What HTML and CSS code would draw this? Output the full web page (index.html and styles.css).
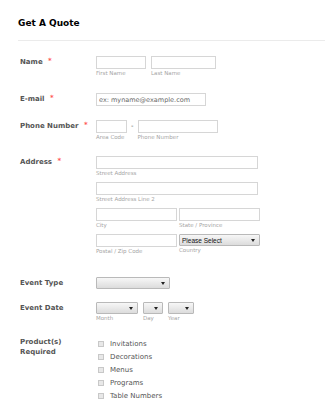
FILE: index.html
```html
<!DOCTYPE html>
<html lang="en">
<head>
  <meta charset="UTF-8" />
  <meta name="viewport" content="width=device-width, initial-scale=1.0"/>
  <title>Get A Quote</title>
  <link rel="stylesheet" href="styles.css">
</head>
<body>

  <!-- 标题 -->
  <div class="form-header">
    <h2>Get A Quote</h2>
  </div>

  <form class="quote-form">

    <div class="row row-name">
      <label class="row-label">Name <span class="req">*</span></label>
      <div class="fields">
        <div class="line">
          <span class="field"><input type="text" class="w-first"><span class="sub">First Name</span></span>
          <span class="field"><input type="text" class="w-last"><span class="sub">Last Name</span></span>
        </div>
      </div>
    </div>

    <div class="row row-email">
      <label class="row-label">E-mail <span class="req">*</span></label>
      <div class="fields">
        <input type="text" class="w-email" placeholder="ex: myname@example.com">
      </div>
    </div>

    <div class="row">
      <label class="row-label">Phone Number <span class="req">*</span></label>
      <div class="fields">
        <div class="line">
          <span class="field"><input type="text" class="w-area"><span class="sub">Area Code</span></span>
          <span class="dash">-</span>
          <span class="field"><input type="text" class="w-phone"><span class="sub">Phone Number</span></span>
        </div>
      </div>
    </div>

    <div class="row row-address">
      <label class="row-label">Address <span class="req">*</span></label>
      <div class="fields">
        <div class="line addr">
          <span class="field"><input type="text" class="w-street"><span class="sub">Street Address</span></span>
        </div>
        <div class="line addr">
          <span class="field"><input type="text" class="w-street"><span class="sub">Street Address Line 2</span></span>
        </div>
        <div class="line addr tight">
          <span class="field"><input type="text" class="w-half"><span class="sub">City</span></span>
          <span class="field"><input type="text" class="w-half"><span class="sub">State / Province</span></span>
        </div>
        <div class="line tight">
          <span class="field"><input type="text" class="w-half"><span class="sub">Postal / Zip Code</span></span>
          <span class="field">
            <span class="select w-half"><select><option>Please Select</option></select></span>
            <span class="sub">Country</span>
          </span>
        </div>
      </div>
    </div>

    <div class="row row-type">
      <label class="row-label">Event Type</label>
      <div class="fields">
        <span class="select w-type"><select><option></option></select></span>
      </div>
    </div>

    <div class="row row-date">
      <label class="row-label">Event Date</label>
      <div class="fields">
        <div class="line">
          <span class="field"><span class="select w-month"><select><option></option></select></span><span class="sub">Month</span></span>
          <span class="field"><span class="select w-day"><select><option></option></select></span><span class="sub">Day</span></span>
          <span class="field"><span class="select w-year"><select><option></option></select></span><span class="sub">Year</span></span>
        </div>
      </div>
    </div>

    <div class="row row-products">
      <label class="row-label">Product(s)<br>Required</label>
      <div class="fields checks">
        <label class="check"><input type="checkbox"> Invitations</label>
        <label class="check"><input type="checkbox"> Decorations</label>
        <label class="check"><input type="checkbox"> Menus</label>
        <label class="check"><input type="checkbox"> Programs</label>
        <label class="check"><input type="checkbox"> Table Numbers</label>
      </div>
    </div>

  </form>

</body>
</html>
```

FILE: styles.css
```css
body {
  margin: 0;
  font-family: "DejaVu Sans", Verdana, sans-serif;
  background-color: #fff;
  color: #555;
}

/* 标题 */
.form-header {
  margin-left: 18px;
  padding-top: 17px;
  height: 23px;
  border-bottom: 1px solid #ebebeb;
}
.form-header h2 {
  margin: 0;
  font-size: 9px;
  line-height: 12px;
  color: #000;
}

.quote-form {
  padding-top: 15px;
}

.row {
  display: flex;
  padding: 0 0 15px 20px;
}
.row-name { padding-bottom: 16px; }
.row-email { padding-bottom: 14px; }
.row-address { padding-bottom: 22px; }
.row-type { padding-bottom: 12px; }
.row-date { padding-bottom: 14px; }

.row-label {
  width: 76px;
  flex-shrink: 0;
  font-size: 7px;
  font-weight: bold;
  line-height: 13px;
  color: #555;
}
.row-products .row-label {
  line-height: 10px;
  padding-top: 1px;
}
.req {
  color: #f55;
  margin-left: 3px;
  position: relative;
  top: -1px;
}

.fields {
  display: flex;
  flex-direction: column;
}
.line {
  display: flex;
  gap: 5px;
}
.line.addr { margin-bottom: 5px; }
.line.tight { gap: 2px; }

.field {
  display: flex;
  flex-direction: column;
}

input[type="text"] {
  box-sizing: border-box;
  height: 13px;
  margin: 0;
  padding: 0 2px;
  border: 1px solid #d6d6d6;
  font-family: inherit;
  font-size: 6.5px;
  color: #555;
}
input::placeholder { color: #666; }

.sub {
  font-size: 5.5px;
  line-height: 8px;
  color: #a5a5a5;
}

.dash {
  font-size: 7px;
  line-height: 12px;
  margin: 0 -1px;
  color: #555;
}

.w-first { width: 50px; }
.w-last { width: 65px; }
.w-email { width: 110px; }
.w-area { width: 31px; }
.w-phone { width: 80px; }
.w-street { width: 162px; }
.w-half { width: 81px; }
.w-type { width: 74px; }
.w-month { width: 42px; }
.w-day { width: 20px; }
.w-year { width: 26px; }

/* 下拉框 */
.select {
  position: relative;
  display: block;
  box-sizing: border-box;
  height: 12px;
}
.select select {
  appearance: none;
  -webkit-appearance: none;
  display: block;
  box-sizing: border-box;
  width: 100%;
  height: 100%;
  margin: 0;
  padding: 0 2px;
  border: 1px solid #b9b9b9;
  border-radius: 1px;
  background: linear-gradient(#f7f7f7, #dcdcdc);
  font-family: "Liberation Sans", Arial, sans-serif;
  font-size: 6.5px;
  color: #111;
}
.select::after {
  content: "";
  position: absolute;
  right: 5px;
  top: 5px;
  border-left: 2px solid transparent;
  border-right: 2px solid transparent;
  border-top: 3px solid #222;
}

/* 复选框 */
.checks {
  padding-top: 1px;
}
.check {
  display: flex;
  align-items: center;
  height: 13px;
  font-size: 7px;
  color: #555;
}
.check input {
  appearance: none;
  -webkit-appearance: none;
  width: 6px;
  height: 6px;
  margin: 0 6px 0 2px;
  border: 1px solid #c8c8c8;
  background: #e8e8e8;
  box-sizing: border-box;
}
```
